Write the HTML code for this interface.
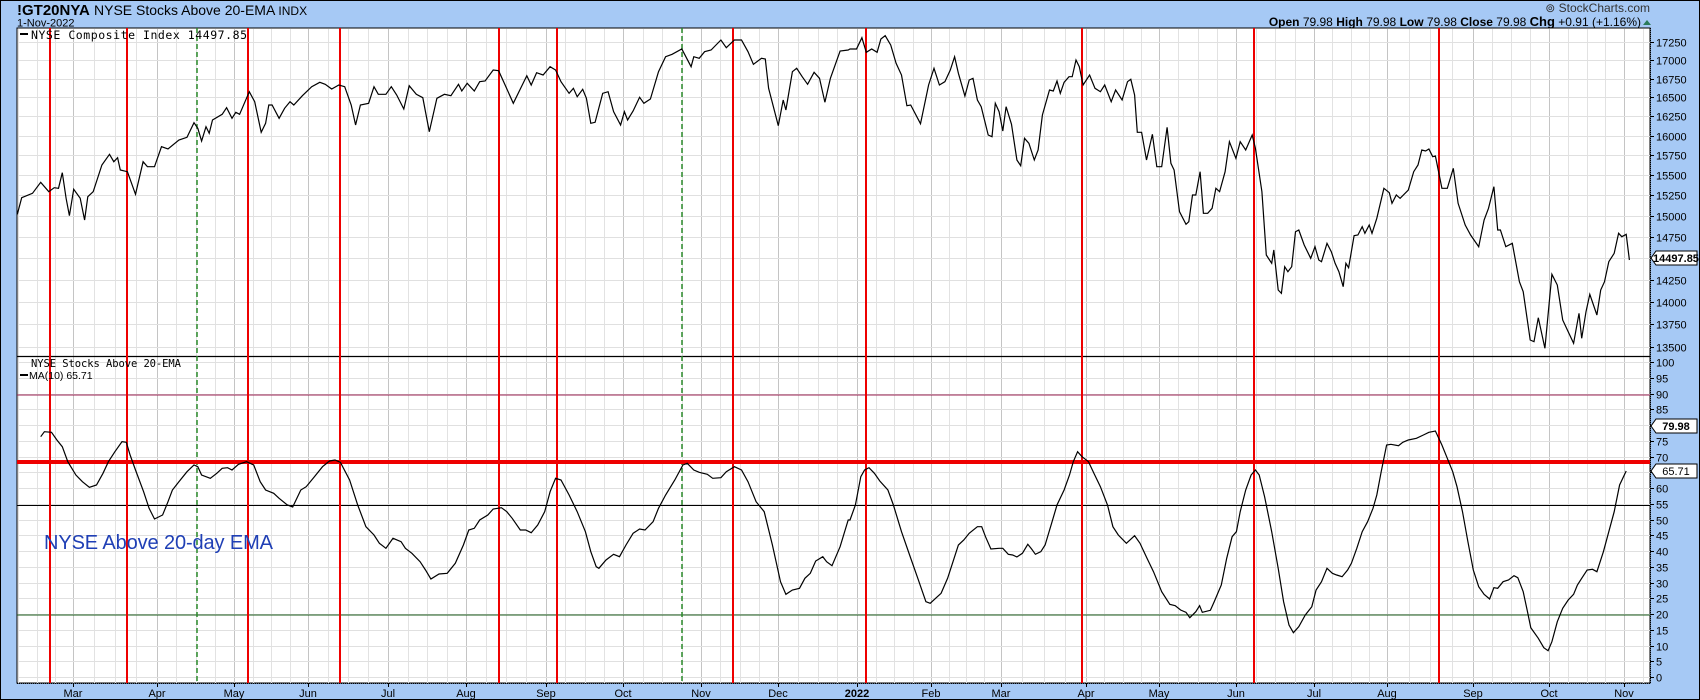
<!DOCTYPE html>
<html><head><meta charset="utf-8"><style>
body{margin:0;width:1700px;height:700px;background:#a6c9f5;overflow:hidden;font-family:"Liberation Sans",sans-serif;}
svg{position:absolute;left:0;top:0}
</style></head><body>
<svg id="s" width="1700" height="700" xmlns="http://www.w3.org/2000/svg">
<rect x="0.5" y="0.5" width="1699" height="699" fill="#a6c9f5" stroke="#000"/>
<rect x="17" y="28" width="1633" height="655" fill="#fff" stroke="#000"/>
<g id="grid"></g>
<g id="lines"></g>
<text x="17" y="15" font-size="15" font-weight="bold" fill="#000">!GT20NYA</text>
<text x="94" y="15" font-size="14" fill="#000">NYSE Stocks Above 20-EMA <tspan font-size="12">INDX</tspan></text>
<text x="17" y="26.5" font-size="11" fill="#000">1-Nov-2022</text>
<text x="1650" y="12" font-size="12" fill="#333" text-anchor="end">⊚ StockCharts.com</text>
<text x="1641" y="26" font-size="12" fill="#000" text-anchor="end"><tspan font-weight="bold">Open</tspan> 79.98 <tspan font-weight="bold">High</tspan> 79.98 <tspan font-weight="bold">Low</tspan> 79.98 <tspan font-weight="bold">Close</tspan> 79.98 <tspan font-weight="bold" font-size="13">Chg</tspan> +0.91 (+1.16%)</text>
<path d="M1643 25 L1647 20 L1651 25Z" fill="#2a7a5a"/>
<text x="31" y="39" font-size="11.5" font-family="DejaVu Sans Mono,monospace" fill="#000" textLength="216">NYSE Composite Index 14497.85</text>
<rect x="20" y="33" width="8" height="2" fill="#000"/>
<text x="31" y="367" font-size="10.5" font-family="DejaVu Sans Mono,monospace" fill="#000" textLength="150">NYSE Stocks Above 20-EMA</text>
<rect x="20" y="374" width="8" height="2" fill="#000"/>
<text x="29" y="379" font-size="10.5" fill="#000">MA(10) 65.71</text>
<text x="44" y="549" font-size="20" fill="#1f3fb5" textLength="229">NYSE Above 20-day EMA</text>
</svg>
<script>
var s=document.getElementById('s'),G=document.getElementById('grid'),L=document.getElementById('lines');
var NS='http://www.w3.org/2000/svg';
function el(p,t,a){var e=document.createElementNS(NS,t);for(var k in a)e.setAttribute(k,a[k]);p.appendChild(e);return e;}
var months=[[0,''],[73,'Mar'],[157,'Apr'],[234,'May'],[308,'Jun'],[388,'Jul'],[466,'Aug'],[546,'Sep'],[623,'Oct'],[701,'Nov'],[778,'Dec'],[857,'2022'],[931,'Feb'],[1001,'Mar'],[1086,'Apr'],[1159,'May'],[1236,'Jun'],[1314,'Jul'],[1387,'Aug'],[1473,'Sep'],[1549,'Oct'],[1624,'Nov'],[1700,'']];
for(var i=0;i<months.length-1;i++){var a=months[i][0],b=months[i+1][0];
 for(var j=0;j<4;j++){var x=Math.round(a+(b-a)*j/4)+0.5;if(x<18||x>1649)continue;
  el(G,'line',{x1:x,x2:x,y1:29,y2:683,stroke:j==0?'#c4c4c4':'#e2e2e2','stroke-width':1});}
 if(months[i][1]){var t=el(s,'text',{x:a,y:697,'font-size':11,'text-anchor':'middle',fill:'#000','font-weight':months[i][1]=='2022'?'bold':'normal'});t.textContent=months[i][1];
  el(s,'line',{x1:a+.5,x2:a+.5,y1:683,y2:687,stroke:'#000'});}}
function yu(v){return 42+1244*(Math.log(17250)-Math.log(v));}
for(var v=13500;v<=17250;v+=250){var y=Math.round(yu(v))+.5;el(G,'line',{x1:18,x2:1650,y1:y,y2:y,stroke:'#e0e0e0'});
 var t=el(s,'text',{x:1656,y:y+4,'font-size':11,fill:'#000'});t.textContent=v;el(s,'line',{x1:1650,x2:1654,y1:y,y2:y,stroke:'#000'});}
function yl(v){return 677-3.15*v;}
for(var v=0;v<=100;v+=5){var y=Math.round(yl(v))+.5;el(G,'line',{x1:18,x2:1650,y1:y,y2:y,stroke:'#e0e0e0'});
 var t=el(s,'text',{x:1656,y:y+4,'font-size':11,fill:'#000'});t.textContent=v;el(s,'line',{x1:1650,x2:1654,y1:y,y2:y,stroke:'#000'});}
el(G,'line',{x1:1650.5,x2:1650.5,y1:28,y2:683,stroke:'#000','stroke-dasharray':'1,1'});
el(G,'line',{x1:17,x2:1650,y1:683.5,y2:683.5,stroke:'#000','stroke-dasharray':'1,1'});
el(L,'line',{x1:17,x2:1650,y1:356.5,y2:356.5,stroke:'#000','stroke-width':1.2});
el(L,'line',{x1:17,x2:1650,y1:395,y2:395,stroke:'#9a2050'});
el(L,'line',{x1:17,x2:1650,y1:505.5,y2:505.5,stroke:'#000'});
el(L,'line',{x1:17,x2:1650,y1:615,y2:615,stroke:'#1a5a1a'});
[50,127,248,340,499,557,733,866,1082,1254,1439].forEach(function(x){el(L,'line',{x1:x,x2:x,y1:28,y2:683,stroke:'#e00','stroke-width':2});});
[197,682].forEach(function(x){el(L,'line',{x1:x,x2:x,y1:28,y2:683,stroke:'#2a8a2a','stroke-width':1.5,'stroke-dasharray':'5,3'});});
el(L,'line',{x1:17,x2:1650,y1:462,y2:462,stroke:'#e00','stroke-width':4});
function path(arrs){var d='';arrs.forEach(function(A){var off=A[0],oy=A[1],p=A[2];for(var i=0;i<p.length;i+=2){d+=(d?'L':'M')+(off+p[i]/1.845).toFixed(1)+' '+(oy+p[i+1]/3).toFixed(1);}});el(L,'path',{d:d,fill:'none',stroke:'#000','stroke-width':1.2});}
path([[0,25,[32,568,40,518,60,505,75,472,90,500,100,488,108,490,115,443,122,520,128,572,136,493,148,520,156,585,162,515,172,500,188,420,202,388,210,410,217,398,222,435,235,440,250,508,264,410,272,425,285,425,298,365,310,372,330,345,345,337,358,293,365,310,372,348,380,305,386,325,392,285,410,268,418,248,428,280,435,262,442,268,460,200,470,230,482,322,490,295,496,240,502,240,515,280,525,250,535,230,542,240,558,212,575,185,590,172,600,178,612,192,625,180,636,185,648,240,656,300,665,240,680,235,690,185,698,208,712,208,722,185,732,210,745,252,755,182,768,208,780,218,792,320,806,220,820,208,832,212,846,178,852,198,862,175,875,198,885,170,895,168,910,135,920,137,932,180,947,235,960,192,972,152,980,180,990,143,1002,150,1015,125,1025,135,1035,170,1050,205,1058,190,1065,215,1075,193,1082,220,1090,295,1098,292,1112,205,1122,200,1132,260,1145,300,1152,260,1158,285,1168,258,1180,217,1188,235,1200,222,1215,140,1228,95,1240,88,1258,72,1275,125,1280,95,1290,100,1300,80,1312,75,1330,45,1340,68,1355,45,1368,45,1380,80,1390,118,1405,100,1412,102,1418,190,1436,302,1445,225,1450,255,1462,140,1470,130,1480,155,1490,178,1502,142,1512,160,1522,232,1532,160,1550,78,1565,75]],
[850,25,[0,72,12,72,22,38,30,82,40,72,50,82,57,42,65,32,75,60,85,115,95,150,105,242,112,240,130,296,145,180,155,130,165,180,175,170,185,135,193,95,200,145,212,213,220,165,227,160,235,225,242,245,255,330,262,335,268,235,275,260,282,318,288,245,298,298,308,405,315,422,322,340,330,355,340,405,347,375,355,270,368,195,375,198,382,168,388,205,395,172,404,155,410,155,417,105,423,125,430,180,442,150,452,190,462,200,470,180,482,230,490,195,502,225,512,170,518,163,525,210,530,322,538,322,547,405,558,328,566,425,575,425,585,307,592,415,598,435,608,560,620,598,625,590,632,510,638,510,646,440,652,565,660,565,668,550,675,490,682,500,692,440,700,350,712,400,720,350,730,375,742,330,748,370,760,500,768,690,778,715,782,675,790,795,796,805,802,725,808,740,815,725,822,620,828,615,838,660,850,700,858,665,865,705,870,710,880,655,888,680,895,715,902,740,910,785,915,715,920,728,930,632,937,630,945,605,950,625,958,600,963,625,972,580,985,490,995,503,1000,535,1008,510,1015,520,1030,495,1040,440,1048,420,1055,375,1062,378,1068,372,1075,395,1080,393,1092,490,1102,490,1113,430,1122,535,1135,600,1145,630,1160,665,1170,585,1178,550,1188,485,1195,615,1200,615,1210,665,1222,655,1235,770,1242,800,1255,945,1262,950,1270,878,1282,970,1295,748,1305,780,1315,885,1325,920,1335,955,1345,865,1350,940,1358,860,1365,808,1378,870,1385,795,1392,770,1400,710,1410,685,1418,625,1424,635,1432,628,1438,705]]]);
path([[0,355,[75,245,82,230,95,232,105,255,115,275,125,320,140,360,152,380,165,397,178,390,190,355,200,320,212,290,225,260,233,262,240,300,250,345,265,410,275,460,285,492,300,480,310,440,318,405,330,380,345,350,358,330,365,335,372,360,388,370,400,355,410,340,420,338,428,345,440,328,455,320,468,330,480,380,490,405,505,415,515,430,530,450,540,456,555,405,565,395,580,365,595,335,608,318,618,315,628,322,645,375,660,450,675,515,690,540,700,565,712,580,725,550,740,560,748,580,760,595,775,620,785,645,795,672,810,657,825,655,840,625,855,570,865,525,875,520,885,495,900,480,910,462,925,458,935,470,945,490,960,525,970,525,980,533,992,510,1005,470,1015,410,1025,370,1035,375,1050,420,1065,470,1080,530,1090,590,1100,635,1105,640,1118,615,1132,598,1143,605,1155,570,1168,535,1180,522,1190,525,1205,500,1215,460,1228,420,1245,375,1260,330,1268,325,1280,345,1290,352,1305,358,1315,370,1330,368,1340,350,1355,335,1368,345,1380,380,1395,440,1410,470,1425,570,1440,680,1450,718,1462,705,1475,700,1485,670,1495,655,1505,618,1518,605,1525,620,1535,632,1550,575,1565,495]],
[850,355,[0,495,10,450,20,365,27,345,35,338,45,355,55,378,70,405,80,450,95,530,110,600,125,670,140,740,148,745,158,730,168,715,180,670,190,620,200,570,210,555,220,535,235,515,243,515,250,545,260,582,275,580,282,580,292,598,300,600,308,606,318,595,328,568,335,582,342,598,352,590,360,570,372,505,382,450,395,405,405,360,412,320,420,290,428,305,440,320,450,355,462,395,475,450,485,515,495,540,510,565,525,542,535,565,548,610,560,650,575,710,590,748,600,752,610,765,620,772,627,788,638,770,645,752,650,772,665,766,672,740,685,690,695,610,705,545,713,530,720,470,730,405,740,360,748,345,755,360,765,425,778,530,790,640,800,740,810,810,818,833,828,815,840,780,852,755,860,705,870,680,880,640,890,655,898,660,908,665,918,645,925,625,935,580,945,530,955,500,965,460,972,420,980,350,990,270,998,268,1012,272,1020,262,1030,255,1045,250,1058,240,1068,232,1080,228,1092,270,1102,310,1112,350,1120,395,1130,470,1140,560,1150,645,1160,695,1170,718,1180,732,1188,698,1195,700,1205,680,1215,675,1225,662,1232,668,1242,710,1250,770,1256,818,1270,850,1280,878,1288,887,1295,860,1305,800,1315,760,1325,735,1335,718,1342,690,1350,670,1360,645,1370,643,1378,650,1390,590,1400,530,1410,470,1420,390,1432,348]]]);
function tag(y,txt,bold){el(s,'path',{d:'M1651 '+y+' L1656 '+(y-7)+' L1697 '+(y-7)+' L1697 '+(y+7)+' L1656 '+(y+7)+'Z',fill:'#fff',stroke:'#000'});
 var t=el(s,'text',{x:1676,y:y+4,'font-size':11,'text-anchor':'middle','font-weight':bold?'bold':'normal',fill:'#000'});t.textContent=txt;}
tag(258,'14497.85',true);tag(426,'79.98',true);tag(471,'65.71',false);
</script>
</body></html>
